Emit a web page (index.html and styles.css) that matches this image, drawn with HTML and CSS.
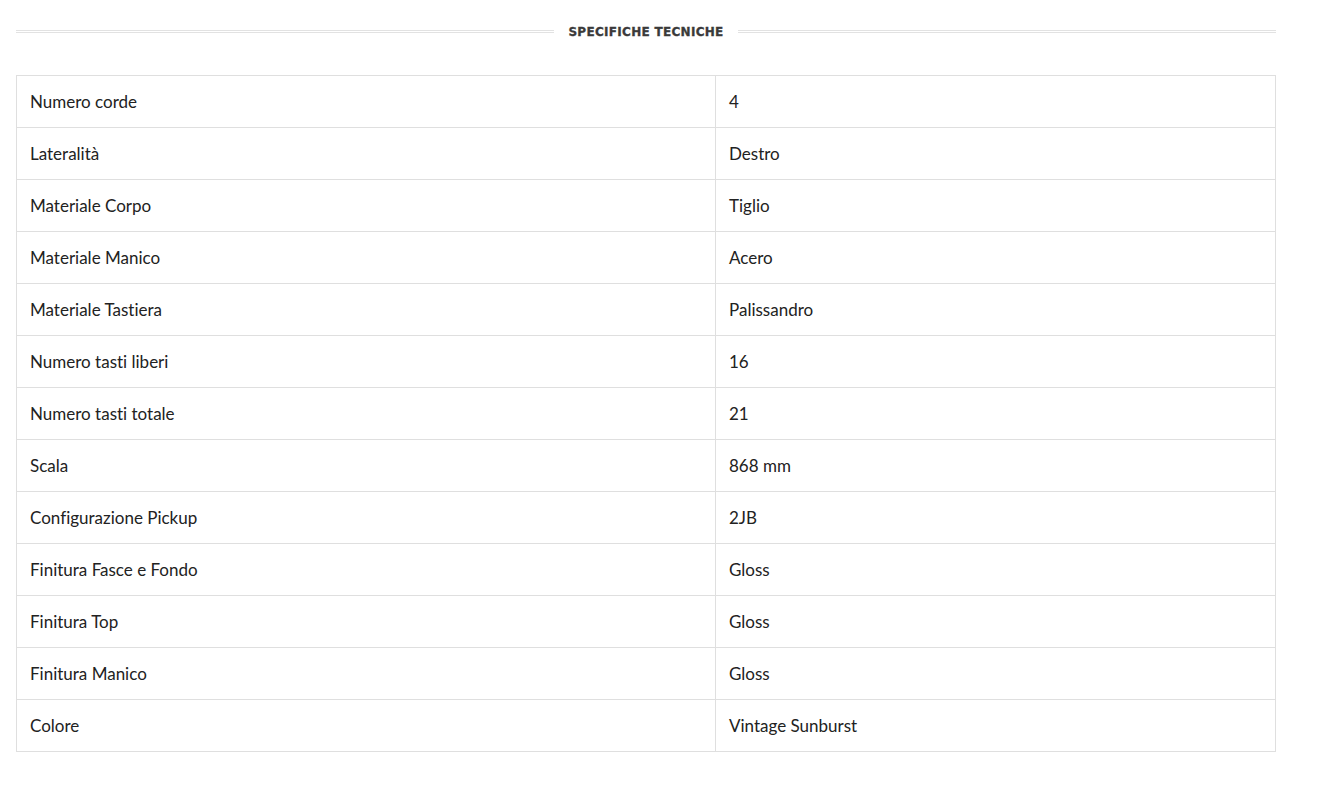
FILE: index.html
```html
<!DOCTYPE html>
<html lang="it">
<head>
<meta charset="utf-8">
<title>Specifiche tecniche</title>
<link rel="stylesheet" href="styles.css">
</head>
<body>
<div class="wrap">
  <div class="heading">
    <span class="rule"></span>
    <h2 class="heading-title">SPECIFICHE TECNICHE</h2>
    <span class="rule"></span>
  </div>
  <table class="specs">
    <colgroup><col class="c1"><col class="c2"></colgroup>
    <tbody>
      <tr><td>Numero corde</td><td>4</td></tr>
      <tr><td>Lateralità</td><td>Destro</td></tr>
      <tr><td>Materiale Corpo</td><td>Tiglio</td></tr>
      <tr><td>Materiale Manico</td><td>Acero</td></tr>
      <tr><td>Materiale Tastiera</td><td>Palissandro</td></tr>
      <tr><td>Numero tasti liberi</td><td>16</td></tr>
      <tr><td>Numero tasti totale</td><td>21</td></tr>
      <tr><td>Scala</td><td>868 mm</td></tr>
      <tr><td>Configurazione Pickup</td><td>2JB</td></tr>
      <tr><td>Finitura Fasce e Fondo</td><td>Gloss</td></tr>
      <tr><td>Finitura Top</td><td>Gloss</td></tr>
      <tr><td>Finitura Manico</td><td>Gloss</td></tr>
      <tr><td>Colore</td><td>Vintage Sunburst</td></tr>
    </tbody>
  </table>
</div>
</body>
</html>
```
FILE: styles.css
```css
html, body {
  margin: 0;
  padding: 0;
  background: #fff;
}
.wrap {
  width: 1260px;
  padding: 22px 16px 0 16px;
  font-family: Lato, "Liberation Sans", sans-serif;
}
.heading {
  display: flex;
  align-items: center;
  gap: 14px;
  height: 18px;
}
.rule {
  flex: 1;
  height: 1px;
  border-top: 1px solid #e2e2e2;
  border-bottom: 1px solid #e2e2e2;
}
.heading-title {
  margin: 0;
  font-family: "DejaVu Sans", Verdana, sans-serif;
  font-weight: bold;
  font-size: 12px;
  color: #3a3a3a;
  line-height: 20px;
  letter-spacing: 0.3px;
  padding-top: 1px;
  -webkit-text-stroke: 0.3px #3a3a3a;
}
.specs {
  margin-top: 35px;
  width: 1259px;
  border-collapse: collapse;
  table-layout: fixed;
}
.c1 { width: 699px; }
.c2 { width: 560px; }
.specs td {
  border: 1px solid #dfdfdf;
  height: 52px;
  box-sizing: border-box;
  padding: 0 13px;
  font-size: 17px;
  color: #222;
  vertical-align: middle;
  font-variant-ligatures: none;
}
```
